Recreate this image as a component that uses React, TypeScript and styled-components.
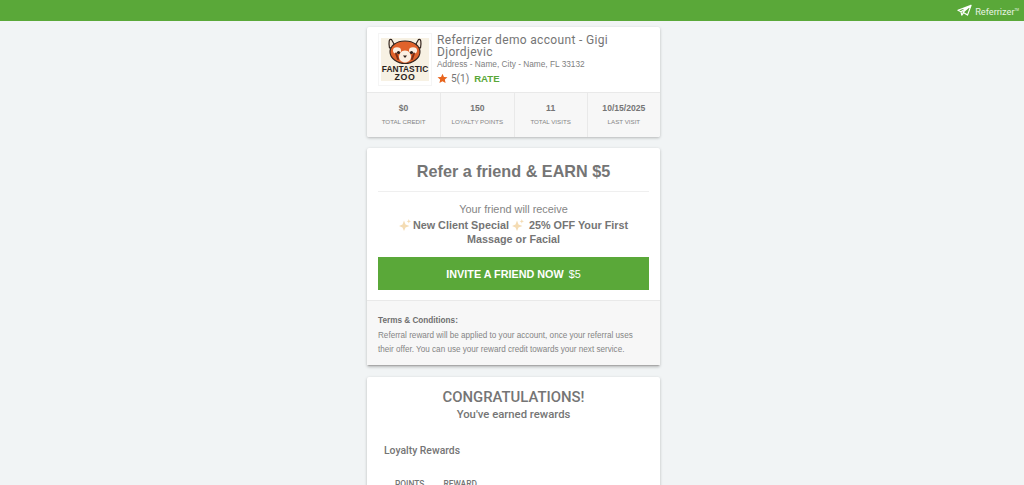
import React from 'react';
import styled, { createGlobalStyle } from 'styled-components';

const GlobalStyle = createGlobalStyle`
  html, body {
    margin: 0;
    height: 485px;
    overflow: hidden;
    background: #f1f4f5;
    color: #757575;
    font-family: 'Roboto', 'Liberation Sans', sans-serif;
  }
`;

const Header = styled.header`
  height: 21px;
  background: #5aa839;
  display: flex;
  justify-content: flex-end;
  align-items: center;
  padding-right: 5px;
  gap: 3px;
`;

const Brand = styled.span`
  font-size: 9.2px;
  color: #e9f4e4;
  margin-top: 1px;
`;

const TradeMark = styled.sup`
  font-size: 3px;
  line-height: 0;
`;

const Page = styled.div`
  display: flex;
  justify-content: center;
  padding-left: 3px;
`;

const Column = styled.main`
  width: 293px;
  margin-top: 6px;
  display: flex;
  flex-direction: column;
  gap: 11px;
`;

const Card = styled.section`
  background: #fff;
  border-radius: 2px;
  box-shadow: 0 1px 3px rgba(0, 0, 0, 0.25);
  overflow: hidden;
`;

const Profile = styled.div`
  display: flex;
  gap: 5px;
  padding: 6px 11px 0;
  height: 59px;
`;

const LogoBox = styled.div`
  width: 54px;
  height: 53px;
  padding: 4px 2px;
  box-sizing: border-box;
  background: #fff;
  border: 1px solid #f5f5f5;
  flex-shrink: 0;
`;

const ProfileInfo = styled.div`
  min-width: 0;
`;

const BusinessName = styled.h1`
  margin: 0;
  font-size: 12px;
  font-weight: 400;
  line-height: 12px;
  padding-top: 1px;
  letter-spacing: 0.33px;
  color: #757575;
`;

const Address = styled.p`
  margin: 0;
  font-size: 8.3px;
  line-height: 12px;
  font-family: 'Liberation Sans', sans-serif;
  color: #808080;
`;

const RatingRow = styled.div`
  display: flex;
  align-items: center;
  margin-top: 1px;
  height: 15px;
  font-size: 10px;
  color: #757575;
`;

const RateLink = styled.span`
  margin-left: 5px;
  font-weight: 700;
  font-size: 9.6px;
  font-family: 'Liberation Sans', sans-serif;
  color: #5aa839;
`;

const Stats = styled.div`
  display: grid;
  grid-template-columns: repeat(4, 1fr);
  background: #f7f7f7;
  border-top: 1px solid #e9e9e9;
  height: 44px;
`;

const Stat = styled.div`
  display: flex;
  flex-direction: column;
  align-items: center;
  padding-top: 10px;
  font-family: 'Liberation Sans', sans-serif;
  & + & {
    border-left: 1px solid #e9e9e9;
  }
`;

const StatValue = styled.strong`
  font-size: 8.6px;
  line-height: 11px;
  color: #757575;
`;

const StatLabel = styled.span`
  font-size: 6.2px;
  line-height: 9px;
  margin-top: 3px;
  color: #858585;
`;

const OfferBody = styled.div`
  padding: 0 11px 10px;
  font-family: 'Liberation Sans', sans-serif;
  text-align: center;
`;

const OfferTitle = styled.h2`
  margin: 0;
  height: 43px;
  line-height: 46px;
  font-size: 16.2px;
  font-weight: 700;
  color: #757575;
  border-bottom: 1px solid #efefef;
`;

const Receive = styled.p`
  margin: 10px 0 0;
  font-size: 10.9px;
  line-height: 14px;
  color: #858585;
`;

const OfferText = styled.p`
  margin: 2px 0 0;
  font-size: 10.8px;
  line-height: 14px;
  font-weight: 700;
  color: #757575;
`;

const SparkleIcon = styled.svg`
  width: 12px;
  height: 12px;
  vertical-align: -2px;
  margin-right: 2px;
`;

const InviteButton = styled.button`
  display: block;
  width: 100%;
  height: 33px;
  margin-top: 11px;
  border: 0;
  background: #5aa839;
  color: #fff;
  font-family: 'Liberation Sans', sans-serif;
  font-size: 10.8px;
  font-weight: 700;
`;

const Amount = styled.span`
  font-weight: 400;
  margin-left: 5px;
`;

const Terms = styled.div`
  background: #f7f7f7;
  border-top: 1px solid #e9e9e9;
  padding: 14px 11px 0;
  height: 51px;
  font-family: 'Liberation Sans', sans-serif;
  box-shadow: inset 0 -1px 0 #a9a9a9;
`;

const TermsTitle = styled.h3`
  margin: 0;
  font-size: 8.2px;
  line-height: 11px;
  font-weight: 700;
  color: #6f6f6f;
`;

const TermsText = styled.p`
  margin: 3px 0 0;
  font-size: 8.15px;
  line-height: 13.5px;
  color: #858585;
`;

const RewardsCard = styled(Card)`
  padding-top: 9px;
  height: 130px;
`;

const Congrats = styled.h2`
  margin: 0;
  text-align: center;
  font-size: 14.9px;
  line-height: 22px;
  font-weight: 500;
  color: #757575;
`;

const Earned = styled.p`
  margin: 0;
  text-align: center;
  font-size: 11.3px;
  line-height: 14px;
  font-weight: 500;
  color: #757575;
`;

const RewardsTitle = styled.h3`
  margin: 23px 0 0 17px;
  font-size: 10.4px;
  line-height: 12px;
  font-weight: 500;
  color: #757575;
`;

const RewardsHead = styled.div`
  display: flex;
  gap: 19px;
  margin: 22px 0 0 28px;
  font-size: 8.4px;
  line-height: 10px;
  font-weight: 500;
  color: #757575;
`;

const PlaneIcon = () => (
  <svg width="15" height="13" viewBox="0 0 16 13" fill="none" aria-hidden="true">
    <path d="M15 1 1 6.2l3.2 1.6L15 1ZM15 1l-8.6 7.4 4.8 3L15 1ZM4.2 7.8l.9 3.6 2-2.6" stroke="#fff" strokeWidth="1.3" strokeLinejoin="round" />
  </svg>
);

const StarIcon = () => (
  <svg width="11" height="11" viewBox="0 0 24 24" aria-hidden="true" style={{ marginRight: 3 }}>
    <path d="M12 1.5l3.2 7 7.6.8-5.7 5.1 1.6 7.5L12 18l-6.7 3.9 1.6-7.5L1.2 9.3l7.6-.8z" fill="#e8651e" />
  </svg>
);

const Sparkle = () => (
  <SparkleIcon viewBox="0 0 12 12" aria-hidden="true">
    <path d="M5 1.5 6.5 5.5 10.5 7 6.5 8.4 5 12 3.5 8.4-.2 7 3.5 5.5Z" fill="#f4dcb4" />
    <path d="M9.8 0l.6 1.7 1.6.6-1.6.6-.6 1.7-.6-1.7-1.6-.6 1.6-.6Z" fill="#f4dcb4" />
  </SparkleIcon>
);

const FantasticZooLogo = () => (
  <svg width="48" height="43" viewBox="0 0 48 43" style={{ display: 'block' }}>
    <rect width="48" height="43" fill="#f7f1e3" />
    <path d="M13 6 10.5 1.5C8 .5 7.5 4 8.5 10L13 9Z M35 6 37.5 1.5C40 .5 40.5 4 39.5 10L35 9Z" fill="#f5e6d3" stroke="#33251f" strokeWidth="1.2" strokeLinejoin="round" />
    <path d="M24 3C33 3 39 8 39 14 39 20 32 25.5 24 25.5 16 25.5 9 20 9 14 9 8 15 3 24 3Z" fill="#e0622b" stroke="#33251f" strokeWidth="1.1" />
    <ellipse cx="16" cy="12.5" rx="4" ry="3.2" fill="#fbefe2" />
    <ellipse cx="32" cy="12.5" rx="4" ry="3.2" fill="#fbefe2" />
    <path d="M24 12.5C28 12.5 30 16 30 19 30 22 27 24.5 24 24.5 21 24.5 18 22 18 19 18 16 20 12.5 24 12.5Z" fill="#fbefe2" />
    <path d="M15 15.5 17 21M33 15.5 31 21" stroke="#7a2f16" strokeWidth="2" strokeLinecap="round" />
    <circle cx="17.5" cy="14.5" r="1.6" fill="#2b1d18" />
    <circle cx="30.5" cy="14.5" r="1.6" fill="#2b1d18" />
    <path d="M22 17.5h4L24 20Z" fill="#2b1d18" />
    <text x="24" y="33.5" textAnchor="middle" fontFamily="Liberation Sans, sans-serif" fontWeight="700" fontSize="8.4" fill="#2a2320">FANTASTIC</text>
    <text x="24" y="41.5" textAnchor="middle" fontFamily="Liberation Sans, sans-serif" fontWeight="700" fontSize="8.8" fill="#2a2320" letterSpacing="0.6">ZOO</text>
  </svg>
);

const stats = [
  { value: '$0', label: 'TOTAL CREDIT' },
  { value: '150', label: 'LOYALTY POINTS' },
  { value: '11', label: 'TOTAL VISITS' },
  { value: '10/15/2025', label: 'LAST VISIT' },
];

const App: React.FC = () => (
  <>
    <GlobalStyle />
    <Header>
      <PlaneIcon />
      <Brand>
        Referrizer<TradeMark>TM</TradeMark>
      </Brand>
    </Header>
    <Page>
      <Column>
        <Card>
          <Profile>
            <LogoBox>
              <FantasticZooLogo />
            </LogoBox>
            <ProfileInfo>
              <BusinessName>Referrizer demo account - Gigi Djordjevic</BusinessName>
              <Address>Address - Name, City - Name, FL 33132</Address>
              <RatingRow>
                <StarIcon />
                5(1)
                <RateLink>RATE</RateLink>
              </RatingRow>
            </ProfileInfo>
          </Profile>
          <Stats>
            {stats.map((stat) => (
              <Stat key={stat.label}>
                <StatValue>{stat.value}</StatValue>
                <StatLabel>{stat.label}</StatLabel>
              </Stat>
            ))}
          </Stats>
        </Card>
        <Card>
          <OfferBody>
            <OfferTitle>Refer a friend &amp; EARN $5</OfferTitle>
            <Receive>Your friend will receive</Receive>
            <OfferText>
              <Sparkle />New Client Special <Sparkle /> 25% OFF Your First
              <br />
              Massage or Facial
            </OfferText>
            <InviteButton>
              INVITE A FRIEND NOW<Amount>$5</Amount>
            </InviteButton>
          </OfferBody>
          <Terms>
            <TermsTitle>Terms &amp; Conditions:</TermsTitle>
            <TermsText>
              Referral reward will be applied to your account, once your referral uses their offer. You can use your reward credit towards your next service.
            </TermsText>
          </Terms>
        </Card>
        <RewardsCard>
          <Congrats>CONGRATULATIONS!</Congrats>
          <Earned>You've earned rewards</Earned>
          <RewardsTitle>Loyalty Rewards</RewardsTitle>
          <RewardsHead>
            <span>POINTS</span>
            <span>REWARD</span>
          </RewardsHead>
        </RewardsCard>
      </Column>
    </Page>
  </>
);

export default App;
